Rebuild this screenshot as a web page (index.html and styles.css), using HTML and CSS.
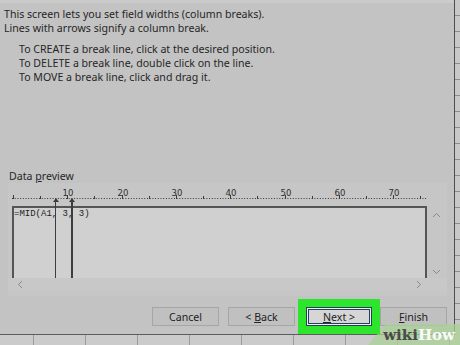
FILE: index.html
```html
<!DOCTYPE html>
<html lang="en">
<head>
  <meta charset="UTF-8">
  <title>Convert Text to Columns Wizard</title>
  <link rel="stylesheet" href="styles.css">
</head>
<body>
  <div class="screen">
    <div class="top">
      <div class="dialog">
        <div class="intro">
          <p>This screen lets you set field widths (column breaks).</p>
          <p>Lines with arrows signify a column break.</p>
          <ul class="steps">
            <li>To CREATE a break line, click at the desired position.</li>
            <li>To DELETE a break line, double click on the line.</li>
            <li>To MOVE a break line, click and drag it.</li>
          </ul>
        </div>
        <div class="group">
          <div class="group-label">Data <u>p</u>review</div>
          <div class="panel">
            <div class="preview-row">
              <div class="preview-area">
                <svg class="ruler" width="416" height="22" viewBox="0 0 416 22">
                  <line x1="0" y1="14.5" x2="415" y2="14.5" stroke="#3a3a3a" stroke-width="1" stroke-dasharray="1 1.7"/>
                  <g stroke="#3a3a3a" stroke-width="1">
                    <line x1="1.5" y1="11" x2="1.5" y2="15"/>
                    <line x1="28.5" y1="12" x2="28.5" y2="15"/>
                    <line x1="55.5" y1="11" x2="55.5" y2="15"/>
                    <line x1="82.5" y1="12" x2="82.5" y2="15"/>
                    <line x1="110.5" y1="11" x2="110.5" y2="15"/>
                    <line x1="137.5" y1="12" x2="137.5" y2="15"/>
                    <line x1="164.5" y1="11" x2="164.5" y2="15"/>
                    <line x1="191.5" y1="12" x2="191.5" y2="15"/>
                    <line x1="218.5" y1="11" x2="218.5" y2="15"/>
                    <line x1="245.5" y1="12" x2="245.5" y2="15"/>
                    <line x1="273.5" y1="11" x2="273.5" y2="15"/>
                    <line x1="300.5" y1="12" x2="300.5" y2="15"/>
                    <line x1="327.5" y1="11" x2="327.5" y2="15"/>
                    <line x1="354.5" y1="12" x2="354.5" y2="15"/>
                    <line x1="381.5" y1="11" x2="381.5" y2="15"/>
                    <line x1="408.5" y1="12" x2="408.5" y2="15"/>
                  </g>
                  <g class="ruler-num" text-anchor="middle">
                    <text x="56" y="12">10</text>
                    <text x="111" y="12">20</text>
                    <text x="165" y="12">30</text>
                    <text x="219" y="12">40</text>
                    <text x="274" y="12">50</text>
                    <text x="328" y="12">60</text>
                    <text x="382" y="12">70</text>
                  </g>
                </svg>
                <div class="preview-box">
                  <pre class="preview-text">=MID(A1, 3, 3)</pre>
                </div>
                <span class="break break-a"></span>
                <span class="break break-b"></span>
              </div>
              <div class="vscroll">
                <svg width="9" height="6" viewBox="0 0 9 6"><path d="M1 5 L4.5 1.5 L8 5" fill="none" stroke="#8a8a8a" stroke-width="1"/></svg>
                <svg width="9" height="6" viewBox="0 0 9 6"><path d="M1 1 L4.5 4.5 L8 1" fill="none" stroke="#8a8a8a" stroke-width="1"/></svg>
              </div>
            </div>
            <div class="hscroll">
              <svg width="6" height="9" viewBox="0 0 6 9"><path d="M5 1 L1.5 4.5 L5 8" fill="none" stroke="#8a8a8a" stroke-width="1"/></svg>
              <svg width="6" height="9" viewBox="0 0 6 9"><path d="M1 1 L4.5 4.5 L1 8" fill="none" stroke="#8a8a8a" stroke-width="1"/></svg>
            </div>
          </div>
        </div>
        <div class="buttons">
          <button class="btn">Cancel</button>
          <button class="btn">&lt; <u>B</u>ack</button>
          <button class="btn btn-default"><u>N</u>ext &gt;</button>
          <button class="btn"><u>F</u>inish</button>
        </div>
      </div>
      <div class="sheet-right"></div>
    </div>
    <div class="sheet-bottom"></div>
    <div class="wikihow"><span class="wiki">wiki</span><span class="how">How</span></div>
  </div>
</body>
</html>
```

FILE: styles.css
```css
* { box-sizing: border-box; }
html, body { margin: 0; padding: 0; }
body { width: 460px; height: 345px; overflow: hidden; background: #c4c4c4; font-family: "Noto Sans", "Open Sans", sans-serif; color: #1e1e1e; }

.screen { position: relative; width: 460px; height: 345px; display: flex; flex-direction: column; }
.top { display: flex; height: 335px; }

/* wizard dialog */
.dialog { width: 454px; height: 335px; background: #c3c3c3; border-top: 3px solid #cbcbcb; border-bottom: 1px solid #5c5c5c; display: flex; flex-direction: column; padding-top: 4px; }
.intro { font-size: 10.6px; line-height: 14px; color: #262626; }
.intro p { margin: 0 0 0 4px; }
.steps { list-style: none; margin: 7px 0 0 19px; padding: 0; }

.group { margin-top: 85px; margin-left: 8px; width: 439px; }
.group-label { font-size: 10.6px; line-height: 14px; padding-left: 1px; color: #262626; }
.panel { background: #c6c6c6; height: 113px; padding-top: 1px; }

.preview-row { display: flex; }
.preview-area { position: relative; margin-left: 4px; width: 416px; }
.ruler { display: block; }
.ruler-num { font-family: "DejaVu Sans", sans-serif; font-size: 8.5px; fill: #2e2e2e; }
.preview-box { height: 72px; background: #d0d0d0; border-top: 2px solid #555; border-left: 2px solid #555; border-right: 2px solid #555; width: 415px; }
.preview-text { margin: 0; font-family: "Liberation Mono", "Courier New", monospace; font-size: 9px; line-height: 12px; color: #222; }

.break { position: absolute; top: 15px; bottom: 0; width: 2px; background: #3c3c3c; }
.break::before { content: ""; position: absolute; top: -1px; left: -2px; border-left: 3px solid transparent; border-right: 3px solid transparent; border-bottom: 4px solid #3c3c3c; }
.break-a { left: 43px; width: 1px; }
.break-b { left: 59px; }

.vscroll { width: 17px; display: flex; flex-direction: column; justify-content: space-between; align-items: center; padding: 28px 0 3px; }
.hscroll { height: 13px; display: flex; justify-content: space-between; align-items: center; padding: 0 25px 0 9px; background: #c8c8c8; }

/* buttons */
.buttons { display: flex; gap: 9px; margin-top: 11px; margin-left: 152px; }
.btn { width: 67px; height: 19px; padding: 0; background: #c0c0c0; border: 1px solid #a6a6a6; font-family: "Noto Sans", "Open Sans", sans-serif; font-size: 10.6px; color: #222; line-height: 16px; }
.btn u { text-decoration-thickness: 1px; text-underline-offset: 1px; }
.btn-default { position: relative; z-index: 1; margin-left: 2px; width: 66px; background: #d6d6d6; border: 1px solid #22405c; box-shadow: inset 0 0 0 1px #f0f0f0, inset 0 0 0 2px #22405c, 0 0 0 8px #2ee52e; }
.btn-default + .btn { margin-left: -1px; }

/* spreadsheet behind */
.sheet-right { flex: 1; border-left: 1px solid #4e4e4e; background-color: #c8c8c8; background-image: repeating-linear-gradient(to bottom, transparent 0 15px, #8c8c8c 15px 16px); }
.sheet-bottom { flex: 1; background-color: #cbcbcb; background-image: repeating-linear-gradient(to right, transparent 0 32px, #9a9a9a 32px 33px, transparent 33px 52px); background-size: 52px 100%; background-position: 1px 0; }

/* watermark */
.wikihow { position: absolute; right: 0; bottom: 0; width: 92px; height: 21px; padding: 0 5px 0 12px; background: rgba(170, 210, 150, 0.75); clip-path: polygon(18px 0, 100% 0, 100% 100%, 0 100%); font-family: "DejaVu Serif", serif; font-weight: bold; font-size: 15px; line-height: 22px; text-align: right; white-space: nowrap; }
.wiki { color: #4a4a4a; }
.how { color: #fafafa; }
```
